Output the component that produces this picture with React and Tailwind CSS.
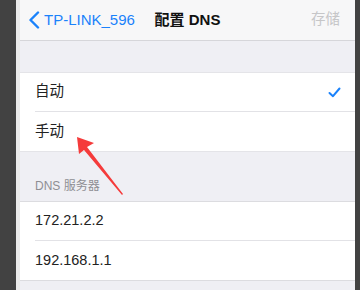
import React from "react";

const font = { fontFamily: '"Liberation Sans", "Noto Sans CJK SC", sans-serif' };

function Row({ label, check, last }) {
  return (
    <div className="h-[39px] pl-[15px] bg-white">
      <div
        className={`h-full flex items-center pr-[14px] text-[14.5px] text-[#222] ${
          last ? "" : "border-b border-[#e2e2e6]"
        }`}
      >
        <span className="flex-1">{label}</span>
        {check && (
          <svg width="13" height="11" viewBox="0 0 13 11">
            <path d="M1.5 6 L5 9.2 L11.5 1.5" fill="none" stroke="#1a82fb" strokeWidth="2" strokeLinecap="round" strokeLinejoin="round" />
          </svg>
        )}
      </div>
    </div>
  );
}

export default function App() {
  return (
    <div className="flex w-[360px] h-[290px] bg-[#424242] overflow-hidden" style={font}>
      <div className="w-[16px]" />
      <div className="w-[4px] bg-[#ebebeb]" />
      <div className="relative flex-1 flex flex-col bg-[#efeff4]">
        {/* nav bar */}
        <div className="relative h-[41px] shrink-0 flex items-center bg-[#f7f7f8] border-b border-[#d6d6da]">
          <div className="flex items-center pl-[8px] text-[15px] text-[#1a82fb]">
            <svg width="12" height="18" viewBox="0 0 12 18">
              <path d="M10 1.5 L2.5 9 L10 16.5" fill="none" stroke="#1a82fb" strokeWidth="2.4" strokeLinecap="round" strokeLinejoin="round" />
            </svg>
            <span className="ml-[4px]">TP-LINK_596</span>
          </div>
          <div className="absolute left-0 right-0 text-center text-[15px] font-semibold text-[#111] pointer-events-none">
            配置 DNS
          </div>
          <span className="ml-auto pr-[15px] text-[14.5px] text-[#c6c6c8]">存储</span>
        </div>

        <div className="h-[31px] shrink-0" />
        <div className="border-t border-[#e4e4e8] border-b">
          <Row label="自动" check />
          <Row label="手动" last />
        </div>

        <div className="h-[49px] shrink-0 flex items-end pl-[15px] pb-[6px] text-[12px] text-[#8e8e93]">
          DNS 服务器
        </div>
        <div className="border-t border-[#dcdce0] border-b">
          <Row label="172.21.2.2" />
          <Row label="192.168.1.1" last />
        </div>

        {/* annotation arrow */}
        <svg className="absolute left-0 top-0" width="335" height="290" viewBox="0 0 335 290">
          <polygon points="57,137 74,143 67,147 103,194 102,195 64,150 59,154" fill="#f53b3b" />
        </svg>
      </div>
      <div className="w-[5px]" />
    </div>
  );
}
